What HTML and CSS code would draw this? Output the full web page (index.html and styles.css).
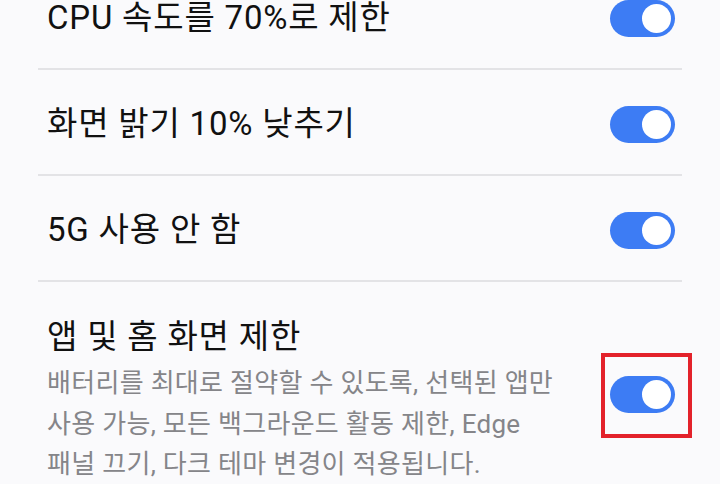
FILE: index.html
```html
<!DOCTYPE html>
<html lang="ko">
<head>
<meta charset="utf-8">
<link rel="stylesheet" href="styles.css">
</head>
<body>
<div class="list">
  <div class="row">
    <div class="title">CPU 속도를 70%로 제한</div>
    <div class="switch"><span class="knob"></span></div>
  </div>
  <div class="row">
    <div class="title">화면 밝기 10% 낮추기</div>
    <div class="switch"><span class="knob"></span></div>
  </div>
  <div class="row">
    <div class="title">5G 사용 안 함</div>
    <div class="switch"><span class="knob"></span></div>
  </div>
  <div class="row row-tall">
    <div class="text">
      <div class="title">앱 및 홈 화면 제한</div>
      <div class="desc">배터리를 최대로 절약할 수 있도록, 선택된 앱만 사용 가능, 모든 백그라운드 활동 제한, Edge 패널 끄기, 다크 테마 변경이 적용됩니다.</div>
    </div>
    <div class="switch switch-raised highlighted"><span class="knob"></span></div>
  </div>
</div>
</body>
</html>
```

FILE: styles.css
```css
html, body {
  margin: 0;
  padding: 0;
  background: #fafafc;
  overflow: hidden;
}
body {
  width: 720px;
  height: 484px;
  font-family: Roboto, "Noto Sans CJK KR", sans-serif;
  color: #111111;
}
.list {
  margin: -36px 38px 0 38px;
}
.row {
  display: flex;
  align-items: center;
  justify-content: space-between;
  padding: 4px 7px 0 9px;
  border-bottom: 2px solid #e3e3e6;
  box-sizing: border-box;
  height: 106px;
}
.row-tall {
  height: auto;
  border-bottom: none;
  padding-top: 35px;
  padding-bottom: 12px;
}
.title {
  font-size: 33px;
  line-height: 40px;
  letter-spacing: 0.8px;
  word-break: keep-all;
}
.text {
  width: 510px;
}
.desc {
  font-size: 26px;
  line-height: 40.5px;
  color: #858589;
  margin-top: 6px;
  letter-spacing: 0.3px;
  word-break: keep-all;
}
.switch {
  position: relative;
  flex: none;
  width: 65px;
  height: 37px;
  border-radius: 19px;
  background: #3d7cf4;
}
.switch-raised {
  margin-bottom: 12px;
}
.knob {
  position: absolute;
  right: 4px;
  top: 4px;
  width: 29px;
  height: 29px;
  border-radius: 50%;
  background: #ffffff;
}
.highlighted::after {
  content: "";
  position: absolute;
  left: -9px;
  top: -23px;
  width: 83px;
  height: 77px;
  border: 4px solid #e3222b;
}
```
